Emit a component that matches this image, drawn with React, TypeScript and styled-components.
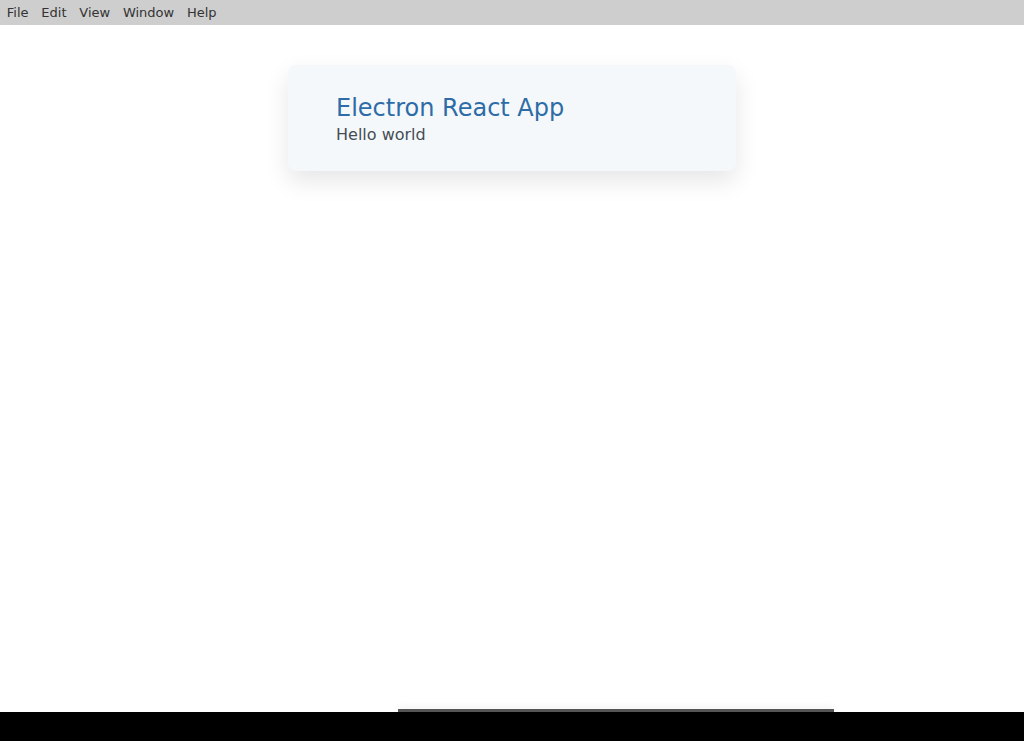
import React from 'react'
import styled, { createGlobalStyle } from 'styled-components'

const GlobalStyle = createGlobalStyle`
  html, body, #root {
    margin: 0;
    padding: 0;
    height: 100%;
  }

  body {
    font-family: 'DejaVu Sans', 'Liberation Sans', sans-serif;
    background: #ffffff;
    overflow: hidden;
  }
`

const menuItems = ['File', 'Edit', 'View', 'Window', 'Help']

export default function App() {
  return (
    <>
      <GlobalStyle />
      <Screen>
        <MenuBar>
          {menuItems.map(item => (
            <MenuItem key={item}>{item}</MenuItem>
          ))}
        </MenuBar>
        <Main>
          <Card>
            <Title>Electron React App</Title>
            <Subtitle>Hello world</Subtitle>
          </Card>
        </Main>
        <BottomBar>
          <Handle />
        </BottomBar>
      </Screen>
    </>
  )
}

const Screen = styled.div`
  display: flex;
  flex-direction: column;
  height: 100vh;
`

const MenuBar = styled.div`
  display: flex;
  align-items: center;
  height: 25px;
  padding-left: 0.4px;
  background: #cecece;
  flex-shrink: 0;
`

const MenuItem = styled.span`
  padding: 0 6.4px;
  font-size: 13px;
  color: #333333;
  line-height: 25px;
`

const Main = styled.main`
  flex: 1;
  display: flex;
  justify-content: center;
  align-items: flex-start;
  padding-top: 40px;
`

const Card = styled.div`
  width: 448px;
  box-sizing: border-box;
  padding: 29px 48px 27px;
  background: #f5f8fb;
  border-radius: 8px;
  box-shadow: 0 10px 24px rgba(0, 0, 0, 0.1);
`

const Title = styled.h1`
  margin: 0 0 3px;
  font-size: 24px;
  font-weight: normal;
  line-height: 28px;
  color: #2d6ca6;
`

const Subtitle = styled.p`
  margin: 0;
  font-size: 16px;
  line-height: 19px;
  color: #454c55;
`

const BottomBar = styled.div`
  position: relative;
  height: 29px;
  background: #000000;
  flex-shrink: 0;
`

const Handle = styled.div`
  position: absolute;
  left: 398px;
  top: -3px;
  width: 436px;
  height: 3px;
  background: #555555;
  box-shadow: 0 -2px 6px rgba(0, 0, 0, 0.08);
`
